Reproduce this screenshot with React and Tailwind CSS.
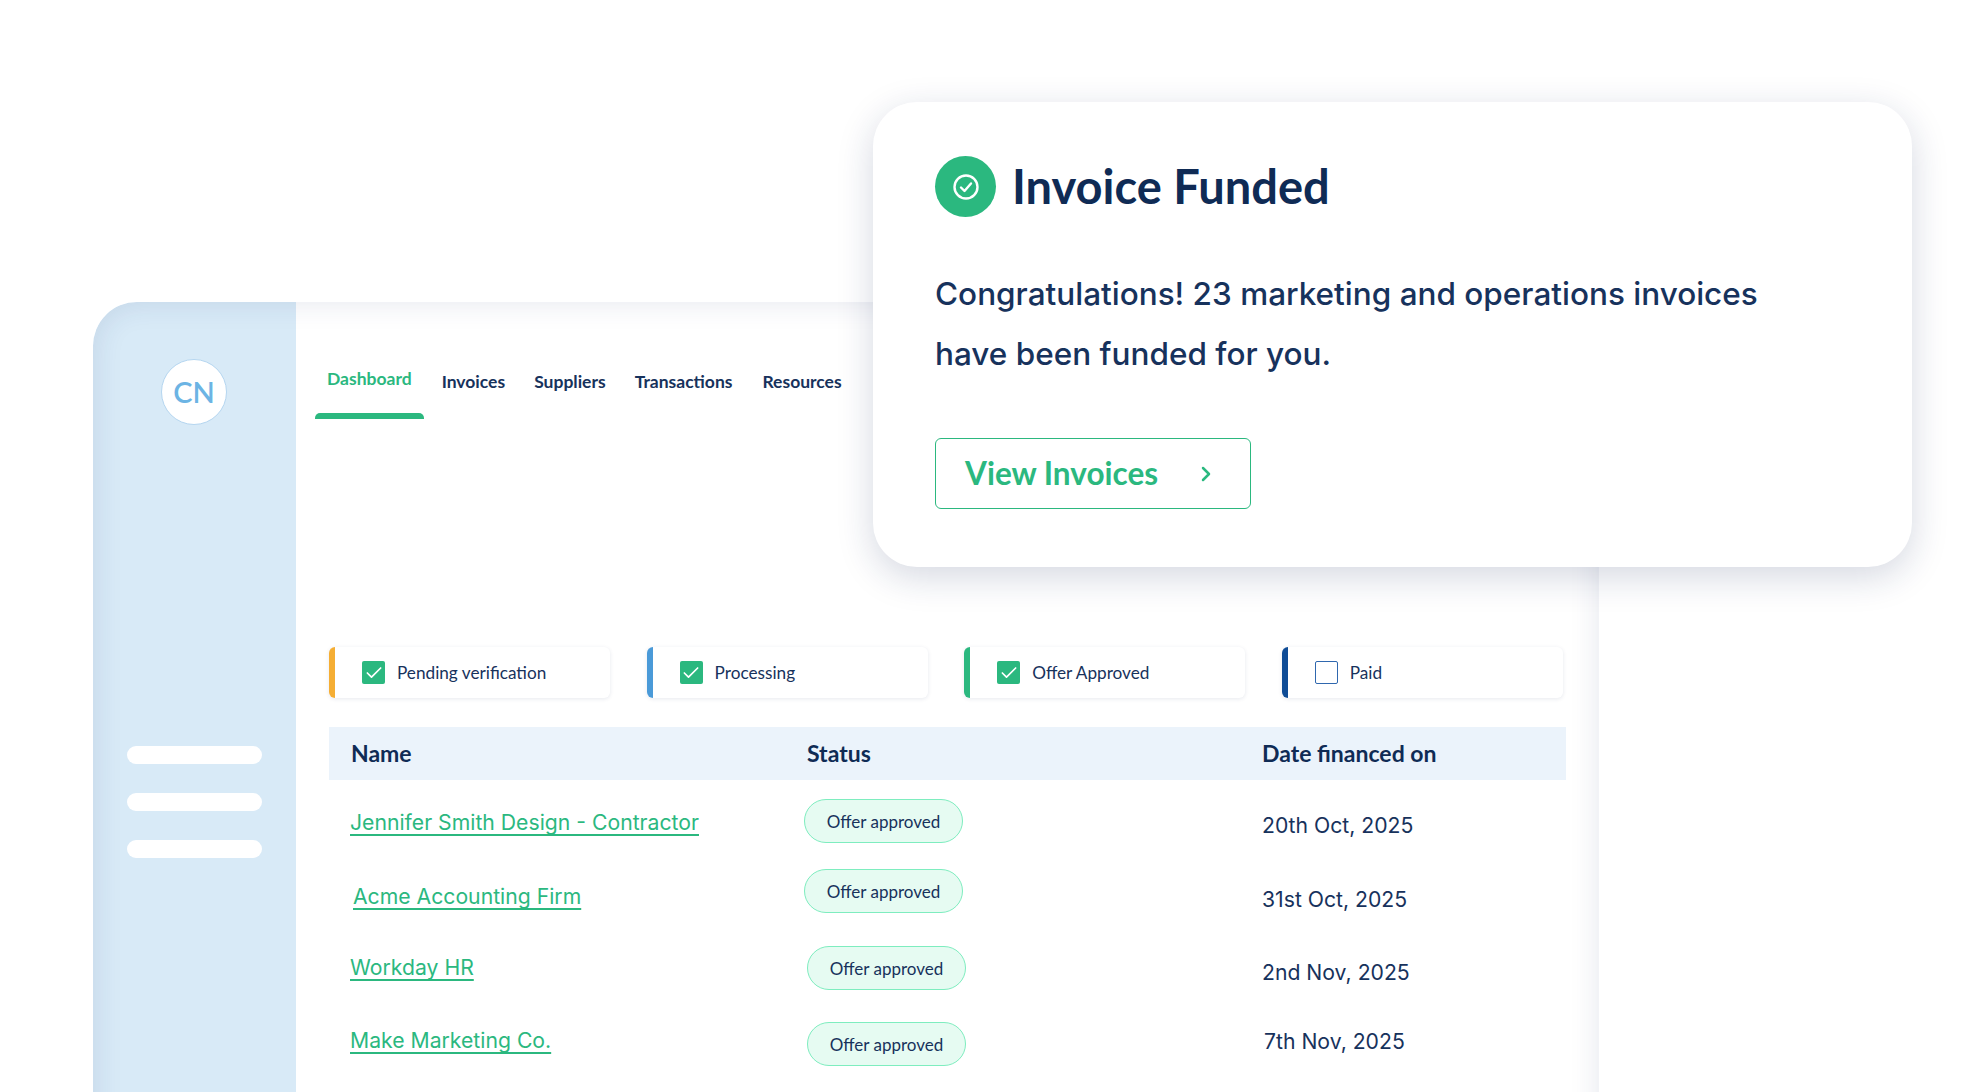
import { Check, ChevronRight } from 'lucide-react';

const navItems = [
  { label: 'Invoices', cls: 'ml-[30px]' },
  { label: 'Suppliers', cls: 'ml-[29px]' },
  { label: 'Transactions', cls: 'ml-[29px]' },
  { label: 'Resources', cls: 'ml-[30px]' },
];

const filters = [
  { label: 'Pending verification', bar: 'bg-[#F5AE34]', checked: true },
  { label: 'Processing', bar: 'bg-[#4A9AD8]', checked: true },
  { label: 'Offer Approved', bar: 'bg-[#2BB87F]', checked: true },
  { label: 'Paid', bar: 'bg-[#0F4C96]', checked: false },
];

const rows = [
  { name: 'Jennifer Smith Design - Contractor', date: '20th Oct, 2025', nameCls: 'mt-[17px] ml-[-1px]', badgeCls: 'mt-[9px] ml-[-3px]', dateCls: 'mt-[20px]' },
  { name: 'Acme Accounting Firm', date: '31st Oct, 2025', nameCls: 'mt-[15px] ml-[2px]', badgeCls: 'mt-[3px] ml-[-3px]', dateCls: 'mt-[18px]' },
  { name: 'Workday HR', date: '2nd Nov, 2025', nameCls: 'mt-[10px] ml-[-1px]', badgeCls: 'mt-[4px]', dateCls: 'mt-[15px]' },
  { name: 'Make Marketing Co.', date: '7th Nov, 2025', nameCls: 'mt-[7px] ml-[-1px]', badgeCls: 'mt-[4px]', dateCls: 'mt-[8px] ml-[2px]' },
];

function Filter({ label, bar, checked }) {
  return (
    <div className="w-[281px] h-[51px] flex items-center rounded-md bg-white shadow-[0_1px_4px_rgba(15,43,85,0.1)] overflow-hidden">
      <div className={`w-[6px] h-full ${bar}`} />
      {checked ? (
        <div className="ml-[27px] w-[23px] h-[23px] rounded-[2px] bg-[#2BB87F] flex items-center justify-center">
          <Check size={20} color="#fff" strokeWidth={2} />
        </div>
      ) : (
        <div className="ml-[27px] w-[23px] h-[23px] rounded-[2px] border border-[#2F67AE] bg-white" />
      )}
      <span className="ml-[12px] text-[17.2px] text-[#17325C] font-['Lato',sans-serif]">{label}</span>
    </div>
  );
}

function Badge({ className }) {
  return (
    <div className={`w-[159px] h-[44px] rounded-full border border-[#7EEDBF] bg-[#E6FBF2] flex items-center justify-center text-[17px] text-[#17325C] font-['Lato',sans-serif] ${className}`}>
      Offer approved
    </div>
  );
}

export default function App() {
  return (
    <div className="relative w-[1986px] h-[1092px] overflow-hidden bg-white pt-[302px] pl-[93px]">
      <div className="relative w-[1506px] h-[830px] rounded-t-[44px] overflow-hidden flex bg-white">
        <aside className="w-[203px] shrink-0 bg-[#D8EAF7] flex flex-col items-center">
          <div className="mt-[57px] mr-[1px] w-[66px] h-[66px] rounded-full bg-white border border-[#B5D6F0] flex items-center justify-center text-[29px] font-semibold text-[#6CB4E4] font-['Lato',sans-serif]">
            CN
          </div>
          <div className="mt-[321px] flex flex-col gap-[29px]">
            <div className="w-[135px] h-[18px] rounded-full bg-white" />
            <div className="w-[135px] h-[18px] rounded-full bg-white" />
            <div className="w-[135px] h-[18px] rounded-full bg-white" />
          </div>
        </aside>

        <main className="flex-1">
          <nav className="flex items-start pl-[31px] pt-[64px] text-[17.5px] font-bold text-[#17325C] font-['Lato',sans-serif]">
            <div className="text-[#2BB87F]">Dashboard</div>
            {navItems.map((item) => (
              <div key={item.label} className={`mt-[3px] ${item.cls}`}>{item.label}</div>
            ))}
          </nav>
          <div className="mt-[18px] ml-[19px] w-[109px] h-[6px] rounded-t-[5px] bg-[#2BB87F]" />

          <div className="mt-[228px] ml-[33px] w-[1237px]">
            <div className="flex gap-[36.6px]">
              {filters.map((f) => (
                <Filter key={f.label} {...f} />
              ))}
            </div>

            <div className="mt-[29px] h-[53px] bg-[#EBF3FB] grid grid-cols-[456px_455px_1fr] items-center pl-[22px] pb-[2px] text-[23px] font-bold text-[#0F2B55] font-['Lato',sans-serif]">
              <div>Name</div>
              <div>Status</div>
              <div>Date financed on</div>
            </div>

            <div className="mt-[10px]">
              {rows.map((r) => (
                <div key={r.name} className="h-[76px] grid grid-cols-[456px_455px_1fr] items-start pl-[22px]">
                  <div>
                    <a className={`inline-block text-[21.2px] leading-[30px] text-[#2BB87F] underline underline-offset-[4px] font-['Inter',sans-serif] ${r.nameCls}`}>{r.name}</a>
                  </div>
                  <div>
                    <Badge className={r.badgeCls} />
                  </div>
                  <div className={`text-[21.2px] leading-[30px] text-[#17325C] font-['Inter',sans-serif] ${r.dateCls}`}>{r.date}</div>
                </div>
              ))}
            </div>
          </div>
        </main>

        <div className="absolute inset-0 rounded-t-[44px] pointer-events-none shadow-[inset_0_0_30px_rgba(30,50,110,0.12)]" />
      </div>

      <section className="absolute left-[873px] top-[102px] w-[1039px] h-[465px] rounded-[44px] bg-white shadow-[0_10px_36px_rgba(20,40,90,0.18)] pl-[62px] pt-[54px]">
        <div className="flex items-center gap-[16px]">
          <div className="w-[61px] h-[61px] rounded-full bg-[#2BB87F] flex items-center justify-center">
            <svg width="26" height="26" viewBox="0 0 26 26" fill="none" stroke="#fff" strokeWidth="2.4" strokeLinecap="round" strokeLinejoin="round">
              <circle cx="13" cy="13" r="11.5" />
              <path d="M8 13.5l3.5 3.5L18 9.5" />
            </svg>
          </div>
          <h1 className="text-[47px] leading-[61px] pb-[2px] h-[61px] font-bold text-[#0F2B55] font-['Lato',sans-serif]">Invoice Funded</h1>
        </div>
        <p className="mt-[47px] text-[31.5px] leading-[60px] font-medium text-[#17325C] font-['Inter',sans-serif]">
          Congratulations! 23 marketing and operations invoices
          <br />
          have been funded for you.
        </p>
        <button className="mt-[54px] w-[316px] h-[71px] rounded-[6px] border border-[#2BB87F] flex items-center pl-[29px] text-[31.5px] font-bold text-[#2BB87F] font-['Lato',sans-serif]">
          View Invoices
          <ChevronRight size={24} strokeWidth={2.5} className="ml-[36px]" />
        </button>
      </section>
    </div>
  );
}
